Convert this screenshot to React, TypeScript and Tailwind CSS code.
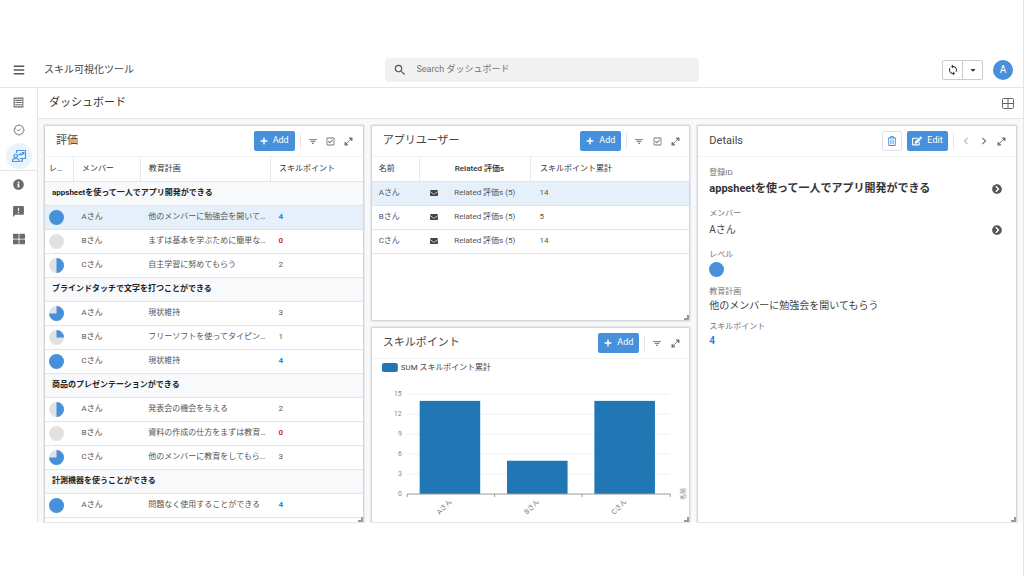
import type { ReactNode } from "react";
import {
  FaBars,
  FaCaretDown,
  FaChevronCircleRight,
  FaEdit,
  FaEnvelope,
  FaInfoCircle,
  FaPlus,
  FaRegCheckSquare,
  FaRegTrashAlt,
  FaThLarge,
} from "react-icons/fa";
import {
  MdAnnouncement,
  MdChevronLeft,
  MdChevronRight,
  MdOutlineReceipt,
  MdSearch,
  MdSync,
} from "react-icons/md";
import { LuBadgeCheck } from "react-icons/lu";

type Evaluation = { level: number; member: string; plan: string; point: string };

const groups: { title: string; rows: Evaluation[] }[] = [
  {
    title: "appsheetを使って一人でアプリ開発ができる",
    rows: [
      { level: 4, member: "Aさん", plan: "他のメンバーに勉強会を開いて…", point: "4" },
      { level: 0, member: "Bさん", plan: "まずは基本を学ぶために簡単な…", point: "0" },
      { level: 2, member: "Cさん", plan: "自主学習に努めてもらう", point: "2" },
    ],
  },
  {
    title: "ブラインドタッチで文字を打つことができる",
    rows: [
      { level: 3, member: "Aさん", plan: "現状維持", point: "3" },
      { level: 1, member: "Bさん", plan: "フリーソフトを使ってタイピン…", point: "1" },
      { level: 4, member: "Cさん", plan: "現状維持", point: "4" },
    ],
  },
  {
    title: "商品のプレゼンテーションができる",
    rows: [
      { level: 2, member: "Aさん", plan: "発表会の機会を与える", point: "2" },
      { level: 0, member: "Bさん", plan: "資料の作成の仕方をまずは教育…", point: "0" },
      { level: 3, member: "Cさん", plan: "他のメンバーに教育をしてもら…", point: "3" },
    ],
  },
  {
    title: "計測機器を使うことができる",
    rows: [
      { level: 4, member: "Aさん", plan: "問題なく使用することができる", point: "4" },
      { level: 3, member: "", plan: "", point: "" },
    ],
  },
];

const users = [
  { name: "Aさん", total: 14 },
  { name: "Bさん", total: 5 },
  { name: "Cさん", total: 14 },
];

function LevelIcon({ level }: { level: number }) {
  const slices = [
    "",
    "M8 8V0A8 8 0 0 1 16 8Z",
    "M8 8V0A8 8 0 0 1 8 16Z",
    "M8 8V0A8 8 0 1 1 0 8Z",
  ];
  return (
    <svg viewBox="0 0 16 16" className="mt-px block size-[15px]" aria-hidden="true">
      <circle cx="8" cy="8" r="8" fill={level === 4 ? "#4790dc" : "#e2e2e2"} />
      {level > 0 && level < 4 && <path d={slices[level]} fill="#4790dc" />}
    </svg>
  );
}

function PresentationIcon() {
  return (
    <svg viewBox="0 0 28 24" className="h-3 w-[14px]" fill="none" stroke="currentColor" strokeWidth="2.400" aria-hidden="true">
      <path d="M9 6V2.500Q9 1 10.500 1H25.500Q27 1 27 2.500V15.500Q27 17 25.500 17H16" />
      <path d="M13 10.500L16.500 7.500L19 10L23 5.500M19.500 5H23.500V9" />
      <circle cx="7.500" cy="12" r="3.500" />
      <path d="M1 23V21Q1 17.500 4.500 17.500H10.500Q14 17.500 14 21V23ZM16 22.500H20.500V17.500" />
    </svg>
  );
}

function LayoutIcon() {
  return (
    <svg viewBox="0 0 24 22" className="h-[11px] w-3" fill="none" stroke="currentColor" strokeWidth="2" aria-hidden="true">
      <rect x="1" y="1" width="22" height="20" rx="2" />
      <path d="M12 1V21M1 11H23" />
    </svg>
  );
}

function FilterIcon() {
  return (
    <svg viewBox="0 0 16 14" className="mt-px h-[7px] w-2 text-[#8c8c8c]" fill="none" stroke="currentColor" strokeWidth="2" aria-hidden="true">
      <path d="M0 3H16M3 7H13M6 11H10" />
      <path d="M2 3H14L8 12Z" fill="currentColor" stroke="none" opacity="0.350" />
    </svg>
  );
}

function ExpandIcon() {
  return (
    <svg viewBox="0 0 18 18" className="size-[9px]" fill="currentColor" aria-hidden="true">
      <path d="M10.500 1H17V7.500L15 8L10 3ZM1 10.500V17H7.500L8 15L3 10Z" />
      <path d="M4 14L14 4" stroke="currentColor" strokeWidth="1.800" />
    </svg>
  );
}

function IconButton({ label, className = "", children }: { label: string; className?: string; children: ReactNode }) {
  return (
    <button aria-label={label} className={`flex w-[18px] items-center justify-center text-[#757575] ${className}`}>
      {children}
    </button>
  );
}

function PrimaryButton({ icon, children }: { icon: ReactNode; children: ReactNode }) {
  return (
    <button className="flex h-5 w-[41px] items-center justify-center gap-[5px] rounded-xs bg-[#4790dc] text-[9px] text-white">
      {icon}
      {children}
    </button>
  );
}

function Panel({ title, actions, className = "", children }: {
  title: string;
  actions: ReactNode;
  className?: string;
  children: ReactNode;
}) {
  return (
    <section className={`relative flex min-h-0 min-w-0 flex-col overflow-hidden border border-[#d5d7da] bg-white shadow-[0_0_1px_1px_#e4e6e9] ${className}`}>
      <header className="flex h-[31px] shrink-0 items-center border-b border-[#f2f3f4] pr-[5px] pl-[11px]">
        <h2 className="flex-1 text-[11px] text-[#444]">{title}</h2>
        {actions}
      </header>
      {children}
      <svg viewBox="0 0 5 5" className="absolute right-0 bottom-0 size-[5px]" aria-hidden="true">
        <path d="M4 0V4H0" fill="none" stroke="#999" strokeWidth="2" />
      </svg>
    </section>
  );
}

function Divider() {
  return <span className="mr-[3px] ml-[5px] h-4 w-px bg-[#e6e6e6]" />;
}

function EvaluationTable() {
  return (
    <div className="min-h-0 flex-1 overflow-hidden">
      <table className="w-full table-fixed border-collapse text-left text-[8px] text-[#555]">
        <colgroup>
          <col className="w-[9%]" />
          <col className="w-[21%]" />
          <col className="w-[41%]" />
          <col className="w-[29%]" />
        </colgroup>
        <thead>
          <tr className="h-6 border-b border-[#e3e4e6] text-[#333]">
            <th className="border-r border-[#e8e8e8] pl-1 font-normal">レ…</th>
            <th className="border-r border-[#e8e8e8] pl-2 font-normal">メンバー</th>
            <th className="border-r border-[#e8e8e8] pl-2 font-normal">教育計画</th>
            <th className="pl-2 font-normal">スキルポイント</th>
          </tr>
        </thead>
        {groups.map((group, g) => (
          <tbody key={group.title}>
            <tr className="h-6 border-b border-[#e3e4e6] bg-[#f8f9fb]">
              <th colSpan={4} className="pl-[7px] font-bold text-[#222]">{group.title}</th>
            </tr>
            {group.rows.map((row, i) => (
              <tr key={i} className={`h-6 border-b border-[#e3e4e6] ${g === 0 && i === 0 ? "bg-[#e6f0fa]" : ""}`}>
                <td className="pl-1"><LevelIcon level={row.level} /></td>
                <td className="pl-2">{row.member}</td>
                <td className="pl-2 whitespace-nowrap">{row.plan}</td>
                <td className={`pl-2 ${row.point === "4" ? "font-bold text-[#1a87ee]" : row.point === "0" ? "font-bold text-[#e0282c]" : ""}`}>
                  {row.point}
                </td>
              </tr>
            ))}
          </tbody>
        ))}
      </table>
    </div>
  );
}

function UserTable() {
  return (
    <div className="min-h-0 flex-1 overflow-hidden">
      <table className="w-full table-fixed border-collapse text-left text-[8px] text-[#555]">
        <colgroup>
          <col className="w-[15%]" />
          <col className="w-[35%]" />
          <col className="w-[50%]" />
        </colgroup>
        <thead>
          <tr className="h-6 border-b border-[#e3e4e6] text-[#333]">
            <th className="border-r border-[#e8e8e8] pl-[7px] font-normal">名前</th>
            <th className="border-r border-[#e8e8e8] pl-[35px] font-medium">Related 評価s</th>
            <th className="pl-[9px] font-normal">スキルポイント累計</th>
          </tr>
        </thead>
        <tbody>
          {users.map((user, i) => (
            <tr key={user.name} className={`h-6 border-b border-[#e3e4e6] ${i === 0 ? "bg-[#e6f0fa]" : ""}`}>
              <td className="pl-[7px]">{user.name}</td>
              <td className="pl-[11px]">
                <div className="flex items-center gap-4">
                  <FaEnvelope className="size-2 text-[#444]" />
                  Related 評価s (5)
                </div>
              </td>
              <td className="pl-[9px]">{user.total}</td>
            </tr>
          ))}
        </tbody>
      </table>
    </div>
  );
}

function PointChart() {
  const baseline = 136;
  const unit = 6.7;
  return (
    <svg viewBox="0 0 320 163" className="w-full" role="img" aria-label="SUM スキルポイント累計">
      <rect x="10" y="4" width="16" height="9" rx="2" fill="#2077b4" />
      <text x="29" y="11" fontSize="8" fill="#444">SUM スキルポイント累計</text>
      {[0, 3, 6, 9, 12, 15].map((v) => (
        <g key={v}>
          {v > 0 && <line x1="35" x2="300" y1={baseline - v * unit} y2={baseline - v * unit} stroke="#edf0f8" />}
          <text x="30" y={baseline - v * unit + 2} fontSize="7" fill="#888" textAnchor="end">{v}</text>
        </g>
      ))}
      {users.map((user, i) => (
        <g key={user.name}>
          <rect x={48 + i * 88} y={baseline - user.total * unit} width="61" height={user.total * unit} fill="#2077b4" />
          <text transform={`translate(${81 + i * 88} 144) rotate(-45)`} fontSize="7" fill="#777" textAnchor="end">
            {user.name}
          </text>
        </g>
      ))}
      <path d="M35.500 139V136H300.500V139M123.500 136V139M211.500 136V139" fill="none" stroke="#999" />
      <text transform="translate(315 142) rotate(-90)" fontSize="6" fill="#777">名前</text>
    </svg>
  );
}

function Field({ label, linked, className = "", children }: {
  label: string;
  linked?: boolean;
  className?: string;
  children: ReactNode;
}) {
  return (
    <div className={className}>
      <dt className="text-[8px] leading-3 text-[#757575]">{label}</dt>
      <dd className={`flex items-center justify-between text-[10px] text-[#444] ${linked ? "leading-5" : "leading-4"}`}>
        {children}
        {linked && (
          <button aria-label={`${label}を開く`} className="text-[#555]">
            <FaChevronCircleRight className="size-[10px]" />
          </button>
        )}
      </dd>
    </div>
  );
}

export default function App() {
  const add = <PrimaryButton icon={<FaPlus className="size-2" />}>Add</PrimaryButton>;
  const navItem = "flex h-[27px] w-full items-center justify-center text-[#6b6b6b]";

  return (
    <div className="flex h-screen flex-col border-r border-[#e4e5e7] bg-white pt-[53px] pb-[54px] font-['Roboto','Noto_Sans_CJK_JP',sans-serif]">
      <header className="flex h-[35px] shrink-0 items-center border-b border-[#e4e5e7] pr-[10px] pb-px">
        <button aria-label="メニュー" className="flex w-[38px] justify-center text-[#555]">
          <FaBars className="size-3" />
        </button>
        <h1 className="flex-1 pl-[6px] text-[10px] text-[#444]">スキル可視化ツール</h1>
        <label className="ml-[26px] flex h-6 w-[31%] items-center gap-[10px] rounded-sm bg-[#f1f1f1] pl-2 text-[#555]">
          <MdSearch className="size-[14px]" />
          <input
            type="search"
            aria-label="Search ダッシュボード"
            placeholder="Search ダッシュボード"
            className="min-w-0 flex-1 bg-transparent text-[9px] outline-none placeholder:text-[#757575]"
          />
        </label>
        <div className="flex flex-1 items-center justify-end gap-[10px]">
          <div className="flex h-5 divide-x divide-[#ccc] rounded-xs border border-[#ccc] text-[#333]">
            <button aria-label="同期" className="flex w-5 items-center justify-center"><MdSync className="size-3" /></button>
            <button aria-label="同期メニュー" className="flex w-[19px] items-center justify-center"><FaCaretDown className="size-2" /></button>
          </div>
          <button className="size-5 rounded-full bg-[#4790dc] text-[10px] text-white">A</button>
        </div>
      </header>

      <div className="flex min-h-0 flex-1">
        <nav className="flex w-[38px] shrink-0 flex-col border-r border-[#e4e5e7] pt-px">
          <div className="border-b border-[#e4e5e7]">
            <button aria-label="評価" className={navItem}><MdOutlineReceipt className="size-[13px]" /></button>
            <button aria-label="スキル" className={navItem}><LuBadgeCheck className="size-3" /></button>
            <button aria-label="ダッシュボード" className="mx-auto mb-px flex size-[26px] items-center justify-center rounded-full bg-[#eaf2fb] text-[#4790dc]">
              <PresentationIcon />
            </button>
          </div>
          <button aria-label="情報" className={navItem}><FaInfoCircle className="size-[11px]" /></button>
          <button aria-label="フィードバック" className={navItem}><MdAnnouncement className="size-[13px]" /></button>
          <button aria-label="アプリ一覧" className={navItem}><FaThLarge className="size-3" /></button>
        </nav>

        <main className="flex min-w-0 flex-1 flex-col">
          <div className="flex h-[31px] shrink-0 items-center justify-between border-b border-[#e4e5e7] pr-[9px] pl-[11px]">
            <h2 className="text-[11px] text-[#333]">ダッシュボード</h2>
            <button aria-label="レイアウト" className="text-[#666]"><LayoutIcon /></button>
          </div>

          <div className="grid min-h-0 flex-1 grid-cols-3 gap-x-[7px] bg-[#f8f9fb] px-[6px] pt-[6px]">
            <Panel
              title="評価"
              className="rounded-t-xs border-b-0"
              actions={
                <>
                  {add}
                  <Divider />
                  <IconButton label="絞り込み"><FilterIcon /></IconButton>
                  <IconButton label="選択"><FaRegCheckSquare className="size-[9px]" /></IconButton>
                  <IconButton label="拡大"><ExpandIcon /></IconButton>
                </>
              }
            >
              <EvaluationTable />
            </Panel>

            <div className="flex min-h-0 min-w-0 flex-col gap-[6px]">
              <Panel
                title="アプリユーザー"
                className="flex-1 rounded-xs"
                actions={
                  <>
                    {add}
                    <Divider />
                    <IconButton label="絞り込み"><FilterIcon /></IconButton>
                    <IconButton label="選択"><FaRegCheckSquare className="size-[9px]" /></IconButton>
                    <IconButton label="拡大"><ExpandIcon /></IconButton>
                  </>
                }
              >
                <UserTable />
              </Panel>
              <Panel
                title="スキルポイント"
                className="flex-1 rounded-t-xs border-b-0"
                actions={
                  <>
                    {add}
                    <Divider />
                    <IconButton label="絞り込み"><FilterIcon /></IconButton>
                    <IconButton label="拡大"><ExpandIcon /></IconButton>
                  </>
                }
              >
                <PointChart />
              </Panel>
            </div>

            <Panel
              title="Details"
              className="rounded-t-xs border-b-0"
              actions={
                <>
                  <button aria-label="削除" className="mr-[5px] flex size-5 items-center justify-center rounded-xs border border-[#e2e2e2] text-[#4790dc]">
                    <FaRegTrashAlt className="size-[10px]" />
                  </button>
                  <PrimaryButton icon={<FaEdit className="size-[10px]" />}>Edit</PrimaryButton>
                  <Divider />
                  <IconButton label="前へ" className="opacity-50"><MdChevronLeft className="size-[14px]" /></IconButton>
                  <IconButton label="次へ"><MdChevronRight className="size-[14px]" /></IconButton>
                  <IconButton label="拡大"><ExpandIcon /></IconButton>
                </>
              }
            >
              <dl className="pt-[10px] pr-[14px] pl-[11px]">
                <Field label="登録ID" linked className="mb-[9px]">
                  <span className="text-[11px] font-bold text-[#333]">appsheetを使って一人でアプリ開発ができる</span>
                </Field>
                <Field label="メンバー" linked className="mb-[9px]">Aさん</Field>
                <Field label="レベル" className="mb-[9px]"><LevelIcon level={4} /></Field>
                <Field label="教育計画" className="mb-[7px]">他のメンバーに勉強会を開いてもらう</Field>
                <Field label="スキルポイント">
                  <span className="font-bold text-[#1a87ee]">4</span>
                </Field>
              </dl>
            </Panel>
          </div>
        </main>
      </div>
    </div>
  );
}
